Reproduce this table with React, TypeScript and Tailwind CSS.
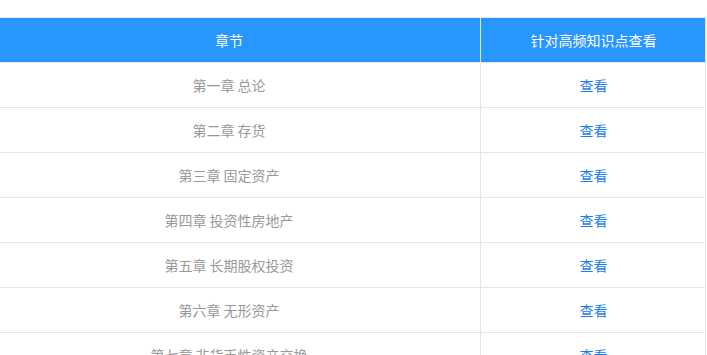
import React from "react";

const chapters = [
  "第一章 总论",
  "第二章 存货",
  "第三章 固定资产",
  "第四章 投资性房地产",
  "第五章 长期股权投资",
  "第六章 无形资产",
  "第七章 非货币性资产交换",
  "第八章 资产减值",
];

export default function App() {
  return (
    <div
      className="w-[707px] h-[355px] overflow-hidden bg-white pt-[17px]"
      style={{ fontFamily: '"Noto Sans CJK SC", "Noto Sans", sans-serif' }}
    >
      <div className="w-[728px] -ml-[22px] border-t border-r border-[#e5e5e5] text-[14px]">
        <div className="grid grid-cols-[503px_225px] bg-[#2896ff] text-white">
          <div className="h-[45px] flex items-center justify-center border-r border-b border-[#e5e5e5]">
            章节
          </div>
          <div className="h-[45px] flex items-center justify-center border-b border-[#e5e5e5]">
            针对高频知识点查看
          </div>
        </div>
        {chapters.map((c) => (
          <div key={c} className="grid grid-cols-[503px_225px]">
            <div className="h-[45px] flex items-center justify-center border-r border-b border-[#e5e5e5] text-[#999999]">
              {c}
            </div>
            <div className="h-[45px] flex items-center justify-center border-b border-[#e5e5e5] text-[#1a7ee8]">
              查看
            </div>
          </div>
        ))}
      </div>
    </div>
  );
}
